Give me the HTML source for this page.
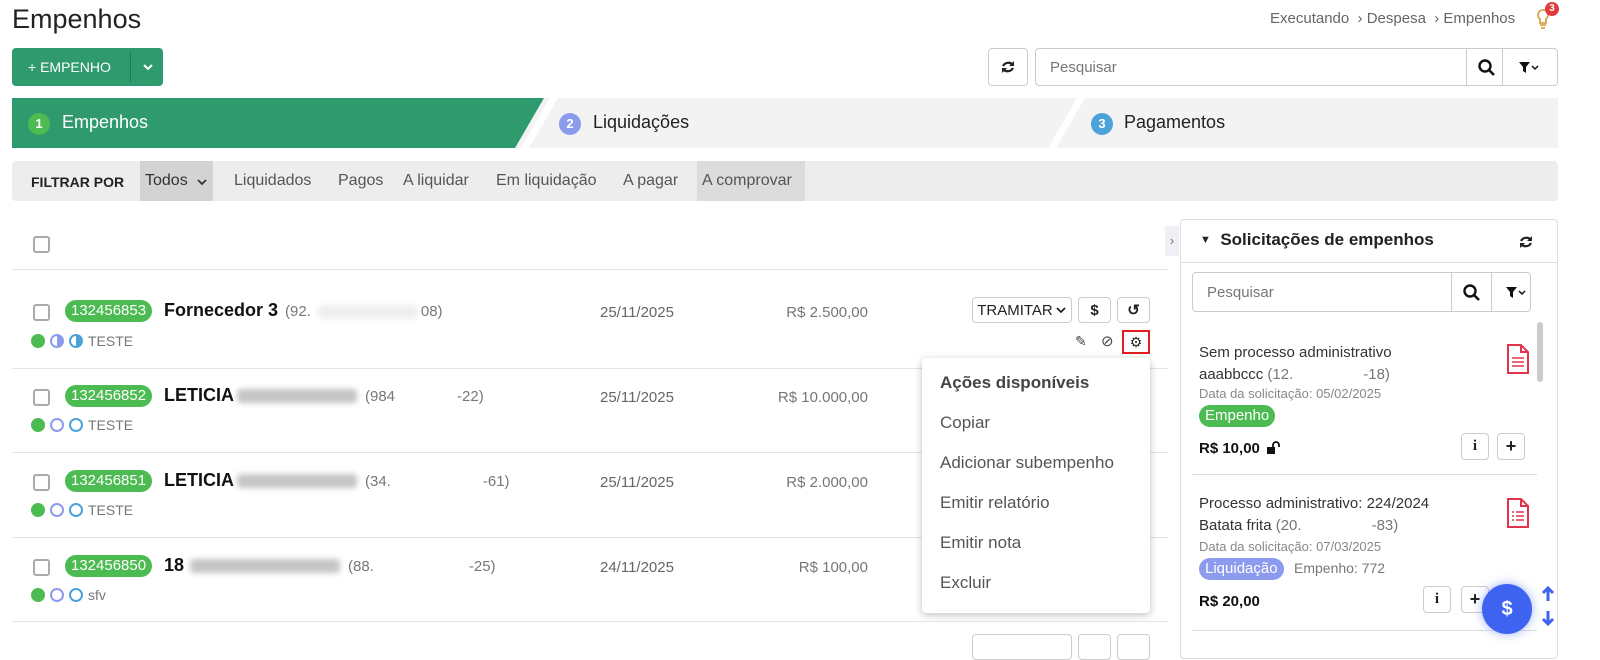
<!DOCTYPE html>
<html><head><meta charset="utf-8"><style>
*{box-sizing:border-box;margin:0;padding:0}
body{width:1600px;height:651px;overflow:hidden;background:#fff;font-family:"Liberation Sans",sans-serif;color:#333;position:relative}
.a{position:absolute}
.blur{position:absolute;background:#ddd;filter:blur(3px);border-radius:4px;height:14px}
.btn{position:absolute;border:1px solid #ccc;border-radius:4px;background:#fff;display:flex;align-items:center;justify-content:center;font-size:15px;color:#222}
.cb{position:absolute;width:17px;height:17px;border:2px solid #aaa;border-radius:3px}
.badge{position:absolute;background:#4cbb52;color:#fff;border-radius:11px;font-size:15px;padding:0 6px;height:22px;line-height:22px}
.dot{position:absolute;width:14px;height:14px;border-radius:50%}
.line{position:absolute;left:12px;width:1156px;height:1px;background:#e5e5e5}
.menu div{height:40px;line-height:40px;font-size:17px;color:#555;padding-left:18px}
</style></head><body>
<div class="a" style="left:12px;top:4px;font-size:27px;color:#222">Empenhos</div>
<div class="a" style="left:1270px;top:10px;font-size:15px;color:#666">Executando &nbsp;›&nbsp;Despesa &nbsp;›&nbsp;Empenhos</div>
<svg class="a" style="left:1536px;top:8px" width="14" height="22"><path d="M7 2a5 5 0 0 0-3 9v4h6v-4a5 5 0 0 0-3-9z" fill="none" stroke="#d9a24a" stroke-width="1.8"/><path d="M4 17h6M5 20h4" stroke="#d9a24a" stroke-width="1.8"/></svg>
<div class="a" style="left:1545px;top:2px;width:14px;height:14px;border-radius:50%;background:#e03a3a;color:#fff;font-size:10px;font-weight:bold;text-align:center;line-height:14px">3</div>

<div class="a" style="left:12px;top:48px;width:151px;height:38px;background:#2f9a6d;border-radius:4px;color:#fff;font-size:14px;line-height:38px"><span style="padding-left:16px">+ EMPENHO</span><span class="a" style="left:118px;top:4px;width:1px;height:30px;background:#1f7a55"></span><svg class="a" style="left:130px;top:14px" width="12" height="10"><path d="M2 3l4 4 4-4" fill="none" stroke="#fff" stroke-width="2"/></svg></div>

<svg width="0" height="0" style="position:absolute"><defs>
<g id="srch"><circle cx="7" cy="7" r="5.5" fill="none" stroke="#111" stroke-width="2.4"/><path d="M11 11l5 5" stroke="#111" stroke-width="2.6"/></g>
<g id="filt"><path d="M1 2h11l-4 5v6l-3-2V7z" fill="#111"/><path d="M14 6l3 3 3-3" fill="none" stroke="#111" stroke-width="1.5"/></g>
<g id="ref"><path d="M13 6a6 6 0 0 0-10 1M3 10a6 6 0 0 0 10-1" fill="none" stroke="#222" stroke-width="2.2"/><path d="M14 2v5h-5z M2 14v-5h5z" fill="#222"/></g>
</defs></svg>

<div class="btn" style="left:988px;top:48px;width:40px;height:38px"><svg width="16" height="16"><use href="#ref"/></svg></div>
<div class="btn" style="left:1035px;top:48px;width:523px;height:38px;justify-content:flex-start;padding-left:14px;color:#777">Pesquisar
<span class="a" style="left:430px;top:0;width:1px;height:36px;background:#ccc"></span><svg class="a" style="left:442px;top:10px" width="18" height="18"><use href="#srch"/></svg>
<span class="a" style="left:466px;top:0;width:1px;height:36px;background:#ccc"></span><svg class="a" style="left:482px;top:11px" width="22" height="16"><use href="#filt"/></svg></div>

<div class="a" style="left:12px;top:98px;width:1546px;height:50px;background:#f3f3f3"></div>
<svg class="a" style="left:12px;top:98px" width="1546" height="50"><polygon points="0,0 532,0 503,50 0,50" fill="#2f9a6d"/><polygon points="538,0 546,0 517,50 509,50" fill="#fff"/><polygon points="1065,0 1073,0 1044,50 1036,50" fill="#fff"/></svg>
<div class="a" style="left:28px;top:113px;width:22px;height:22px;border-radius:50%;background:#4cbb52;color:#fff;font-size:13px;font-weight:bold;text-align:center;line-height:22px">1</div>
<div class="a" style="left:62px;top:112px;font-size:18px;color:#fff">Empenhos</div>
<div class="a" style="left:559px;top:113px;width:22px;height:22px;border-radius:50%;background:#8d9bef;color:#fff;font-size:13px;font-weight:bold;text-align:center;line-height:22px">2</div>
<div class="a" style="left:593px;top:112px;font-size:18px;color:#222">Liquidações</div>
<div class="a" style="left:1091px;top:113px;width:22px;height:22px;border-radius:50%;background:#4da3d9;color:#fff;font-size:13px;font-weight:bold;text-align:center;line-height:22px">3</div>
<div class="a" style="left:1124px;top:112px;font-size:18px;color:#222">Pagamentos</div>

<div class="a" style="left:12px;top:161px;width:1546px;height:40px;background:#ededed;border-radius:4px"></div>
<div class="a" style="left:140px;top:161px;width:73px;height:40px;background:#d3d3d3"></div>
<div class="a" style="left:697px;top:161px;width:108px;height:40px;background:#dcdcdc"></div>
<div class="a" style="left:31px;top:174px;font-size:14px;font-weight:bold;color:#222">FILTRAR POR</div>
<div class="a" style="left:145px;top:172px;font-size:16px;color:#333">Todos</div>
<svg class="a" style="left:196px;top:177px" width="12" height="10"><path d="M2 3l4 4 4-4" fill="none" stroke="#333" stroke-width="1.8"/></svg>
<div class="a" style="left:234px;top:172px;font-size:16px;color:#555">Liquidados</div>
<div class="a" style="left:338px;top:172px;font-size:16px;color:#555">Pagos</div>
<div class="a" style="left:403px;top:172px;font-size:16px;color:#555">A liquidar</div>
<div class="a" style="left:496px;top:172px;font-size:16px;color:#555">Em liquidação</div>
<div class="a" style="left:623px;top:172px;font-size:16px;color:#555">A pagar</div>
<div class="a" style="left:702px;top:172px;font-size:16px;color:#555">A comprovar</div>

<div class="cb" style="left:33px;top:236px"></div>
<div class="line" style="top:269px"></div>
<div class="line" style="top:368px"></div>
<div class="line" style="top:452px"></div>
<div class="line" style="top:537px"></div>
<div class="line" style="top:621px"></div>

<!-- row 1 -->
<div class="cb" style="left:33px;top:304px"></div>
<div class="badge" style="left:65px;top:300px">132456853</div>
<div class="a" style="left:164px;top:300px;font-size:18px;font-weight:bold;color:#111">Fornecedor 3</div>
<div class="a" style="left:285px;top:303px;font-size:15px;color:#777">(92.<span style="display:inline-block;width:110px"></span>08)</div>
<div class="blur" style="left:318px;top:305px;width:100px;background:#eee"></div>
<div class="dot" style="left:31px;top:334px;background:#4cbb52"></div>
<div class="dot" style="left:50px;top:334px;border:2px solid #8d9bef;background:linear-gradient(90deg,#fff 50%,#8d9bef 50%)"></div>
<div class="dot" style="left:69px;top:334px;border:2px solid #4da3d9;background:linear-gradient(90deg,#fff 50%,#4da3d9 50%)"></div>
<div class="a" style="left:88px;top:333px;font-size:14px;color:#777">TESTE</div>
<div class="a" style="left:600px;top:304px;font-size:15px;color:#666">25/11/2025</div>
<div class="a" style="left:740px;top:304px;width:128px;text-align:right;font-size:15px;color:#777">R$ 2.500,00</div>
<div class="btn" style="left:972px;top:297px;width:100px;height:26px;font-size:15px">TRAMITAR<svg width="12" height="10" style="margin-left:2px"><path d="M2 3l4 4 4-4" fill="none" stroke="#222" stroke-width="1.8"/></svg></div>
<div class="btn" style="left:1078px;top:297px;width:33px;height:26px;font-weight:bold">$</div>
<div class="btn" style="left:1117px;top:297px;width:33px;height:26px;font-weight:bold">↺</div>
<div class="a" style="left:1075px;top:333px;font-size:14px;color:#444">✎</div>
<div class="a" style="left:1101px;top:332px;font-size:15px;color:#444">⊘</div>
<div class="a" style="left:1122px;top:330px;width:28px;height:24px;border:2px solid #e02020;text-align:center;font-size:14px;line-height:20px;color:#222">⚙</div>

<!-- row 2 -->
<div class="cb" style="left:33px;top:389px"></div>
<div class="badge" style="left:65px;top:385px">132456852</div>
<div class="a" style="left:164px;top:385px;font-size:18px;font-weight:bold;color:#111">LETICIA</div>
<div class="blur" style="left:237px;top:389px;width:120px;background:#c4c4c4"></div>
<div class="a" style="left:365px;top:388px;font-size:15px;color:#777">(984<span style="display:inline-block;width:62px"></span>-22)</div>
<div class="dot" style="left:31px;top:418px;background:#4cbb52"></div>
<div class="dot" style="left:50px;top:418px;border:2px solid #8d9bef"></div>
<div class="dot" style="left:69px;top:418px;border:2px solid #4da3d9"></div>
<div class="a" style="left:88px;top:417px;font-size:14px;color:#777">TESTE</div>
<div class="a" style="left:600px;top:389px;font-size:15px;color:#666">25/11/2025</div>
<div class="a" style="left:740px;top:389px;width:128px;text-align:right;font-size:15px;color:#777">R$ 10.000,00</div>

<!-- row 3 -->
<div class="cb" style="left:33px;top:474px"></div>
<div class="badge" style="left:65px;top:470px">132456851</div>
<div class="a" style="left:164px;top:470px;font-size:18px;font-weight:bold;color:#111">LETICIA</div>
<div class="blur" style="left:237px;top:474px;width:120px;background:#c4c4c4"></div>
<div class="a" style="left:365px;top:473px;font-size:15px;color:#777">(34.<span style="display:inline-block;width:92px"></span>-61)</div>
<div class="dot" style="left:31px;top:503px;background:#4cbb52"></div>
<div class="dot" style="left:50px;top:503px;border:2px solid #8d9bef"></div>
<div class="dot" style="left:69px;top:503px;border:2px solid #4da3d9"></div>
<div class="a" style="left:88px;top:502px;font-size:14px;color:#777">TESTE</div>
<div class="a" style="left:600px;top:474px;font-size:15px;color:#666">25/11/2025</div>
<div class="a" style="left:740px;top:474px;width:128px;text-align:right;font-size:15px;color:#777">R$ 2.000,00</div>

<!-- row 4 -->
<div class="cb" style="left:33px;top:559px"></div>
<div class="badge" style="left:65px;top:555px">132456850</div>
<div class="a" style="left:164px;top:555px;font-size:18px;font-weight:bold;color:#111">18</div>
<div class="blur" style="left:190px;top:559px;width:150px;background:#c4c4c4"></div>
<div class="a" style="left:348px;top:558px;font-size:15px;color:#777">(88.<span style="display:inline-block;width:95px"></span>-25)</div>
<div class="dot" style="left:31px;top:588px;background:#4cbb52"></div>
<div class="dot" style="left:50px;top:588px;border:2px solid #8d9bef"></div>
<div class="dot" style="left:69px;top:588px;border:2px solid #4da3d9"></div>
<div class="a" style="left:88px;top:587px;font-size:14px;color:#777">sfv</div>
<div class="a" style="left:600px;top:559px;font-size:15px;color:#666">24/11/2025</div>
<div class="a" style="left:740px;top:559px;width:128px;text-align:right;font-size:15px;color:#777">R$ 100,00</div>
<div class="btn" style="left:972px;top:634px;width:100px;height:26px"></div>
<div class="btn" style="left:1078px;top:634px;width:33px;height:26px"></div>
<div class="btn" style="left:1117px;top:634px;width:33px;height:26px"></div>

<!-- menu -->
<div class="a menu" style="left:922px;top:358px;width:228px;height:255px;background:#fff;border-radius:4px;box-shadow:0 2px 8px rgba(0,0,0,.25);padding-top:5px">
<div style="font-weight:bold;color:#444">Ações disponíveis</div><div>Copiar</div><div>Adicionar subempenho</div><div>Emitir relatório</div><div>Emitir nota</div><div>Excluir</div></div>

<!-- right panel -->
<div class="a" style="left:1165px;top:226px;width:14px;height:30px;background:#eef0f5;color:#777;font-size:13px;text-align:center;line-height:30px">›</div>
<div class="a" style="left:1180px;top:219px;width:378px;height:440px;border:1px solid #ddd;border-radius:4px"></div>
<div class="a" style="left:1200px;top:230px;font-size:17px;font-weight:bold;color:#222"><span style="font-size:11px;vertical-align:2px">▼</span>&nbsp; Solicitações de empenhos</div>
<svg class="a" style="left:1518px;top:234px" width="16" height="16"><use href="#ref"/></svg>
<div class="a" style="left:1181px;top:262px;width:376px;height:1px;background:#ddd"></div>
<div class="btn" style="left:1192px;top:272px;width:339px;height:40px;justify-content:flex-start;padding-left:14px;color:#777">Pesquisar
<span class="a" style="left:258px;top:0;width:1px;height:38px;background:#ccc"></span><svg class="a" style="left:270px;top:11px" width="18" height="18"><use href="#srch"/></svg>
<span class="a" style="left:298px;top:0;width:1px;height:38px;background:#ccc"></span><svg class="a" style="left:312px;top:12px" width="22" height="16"><use href="#filt"/></svg></div>
<div class="a" style="left:1537px;top:322px;width:6px;height:60px;background:#ccc;border-radius:3px"></div>

<div class="a" style="left:1199px;top:342px;font-size:15px;color:#333;line-height:22px">Sem processo administrativo<br>aaabbccc <span style="color:#777">(12.<span style="display:inline-block;width:70px"></span>-18)</span></div>
<div class="a" style="left:1199px;top:386px;font-size:13px;color:#888">Data da solicitação: 05/02/2025</div>
<div class="a" style="left:1199px;top:405px;background:#4cbb52;color:#fff;font-size:15px;border-radius:11px;padding:0 6px;height:22px;line-height:22px">Empenho</div>
<div class="a" style="left:1199px;top:440px;font-size:15px;font-weight:bold;color:#111">R$ 10,00</div>
<svg class="a" style="left:1266px;top:441px" width="14" height="14"><rect x="1" y="6" width="8" height="7" fill="#111"/><path d="M7 6V4a3 3 0 0 1 6 0v2" fill="none" stroke="#111" stroke-width="1.8"/></svg>
<div class="btn" style="left:1461px;top:433px;width:28px;height:27px;font-weight:bold;font-family:'Liberation Serif',serif">i</div>
<div class="btn" style="left:1497px;top:433px;width:28px;height:27px;font-weight:bold;font-size:18px">+</div>
<svg class="a" style="left:1506px;top:343px" width="24" height="32"><path d="M2 2h13l7 7v21H2z M15 2v7h7" fill="none" stroke="#e0344c" stroke-width="2"/><path d="M6 15h12M6 19h12M6 23h12" stroke="#e0344c" stroke-width="1.6"/></svg>
<div class="a" style="left:1192px;top:474px;width:345px;height:1px;background:#ddd"></div>

<div class="a" style="left:1199px;top:493px;font-size:15px;color:#333;line-height:22px">Processo administrativo: 224/2024<br>Batata frita <span style="color:#777">(20.<span style="display:inline-block;width:70px"></span>-83)</span></div>
<div class="a" style="left:1199px;top:539px;font-size:13px;color:#888">Data da solicitação: 07/03/2025</div>
<div class="a" style="left:1199px;top:558px;background:#8d9bef;color:#fff;font-size:15px;border-radius:11px;padding:0 6px;height:22px;line-height:22px">Liquidação</div>
<div class="a" style="left:1294px;top:560px;font-size:14px;color:#777">Empenho: 772</div>
<div class="a" style="left:1199px;top:593px;font-size:15px;font-weight:bold;color:#111">R$ 20,00</div>
<div class="btn" style="left:1423px;top:586px;width:28px;height:27px;font-weight:bold;font-family:'Liberation Serif',serif">i</div>
<div class="btn" style="left:1461px;top:586px;width:28px;height:27px;font-weight:bold;font-size:18px">+</div>
<svg class="a" style="left:1506px;top:497px" width="24" height="32"><path d="M2 2h13l7 7v21H2z M15 2v7h7" fill="none" stroke="#e0344c" stroke-width="2"/><path d="M6 15h2M10 15h8M6 19h2M10 19h8M6 23h2M10 23h8" stroke="#e0344c" stroke-width="1.6"/></svg>
<div class="a" style="left:1192px;top:630px;width:345px;height:1px;background:#ddd"></div>

<div class="a" style="left:1482px;top:584px;width:50px;height:50px;border-radius:50%;background:#3d63f0;box-shadow:0 0 10px rgba(61,99,240,.5);color:#fff;font-size:20px;font-weight:bold;text-align:center;line-height:50px">$</div>
<svg class="a" style="left:1540px;top:585px" width="16" height="44"><path d="M8 16V3M3 8l5-5 5 5M8 26v13M3 34l5 5 5-5" fill="none" stroke="#3d63f0" stroke-width="3"/></svg>
</body></html>
